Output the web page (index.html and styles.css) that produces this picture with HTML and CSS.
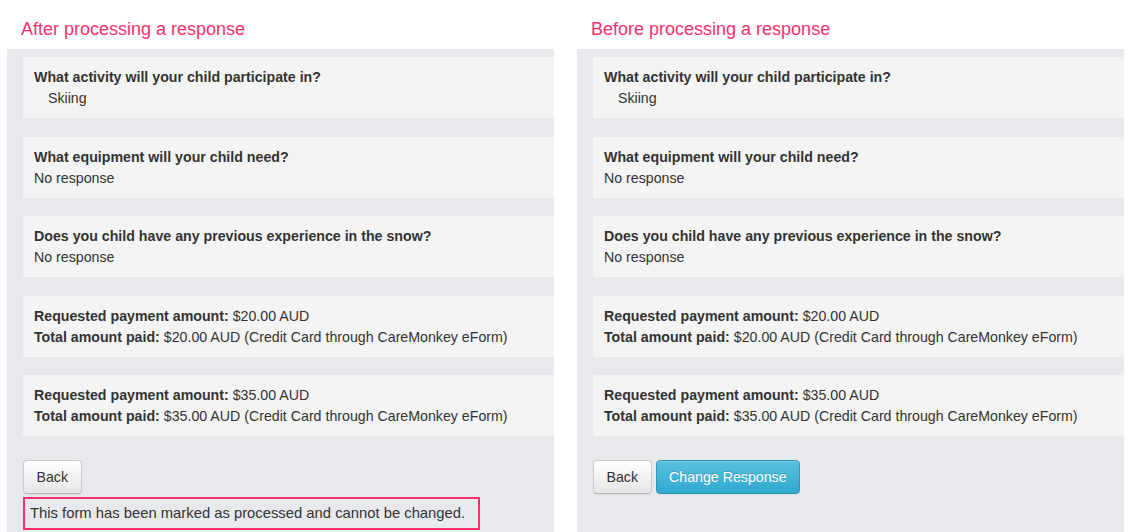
FILE: index.html
```html
<!DOCTYPE html>
<html>
<head>
<meta charset="utf-8">
<link rel="stylesheet" href="styles.css">
</head>
<body>
<div class="page">
  <section class="col">
    <h2 class="title">After processing a response</h2>
    <div class="panel">
      <div class="card"><div class="q">What activity will your child participate in?</div><div class="a indent">Skiing</div></div>
      <div class="card"><div class="q">What equipment will your child need?</div><div class="a">No response</div></div>
      <div class="card"><div class="q">Does you child have any previous experience in the snow?</div><div class="a">No response</div></div>
      <div class="card"><div class="a"><b>Requested payment amount:</b> $20.00 AUD</div><div class="a"><b>Total amount paid:</b> $20.00 AUD (Credit Card through CareMonkey eForm)</div></div>
      <div class="card"><div class="a"><b>Requested payment amount:</b> $35.00 AUD</div><div class="a"><b>Total amount paid:</b> $35.00 AUD (Credit Card through CareMonkey eForm)</div></div>
      <div class="actions"><button class="btn">Back</button></div>
      <div class="notice">This form has been marked as processed and cannot be changed.</div>
    </div>
  </section>
  <section class="col">
    <h2 class="title">Before processing a response</h2>
    <div class="panel">
      <div class="card"><div class="q">What activity will your child participate in?</div><div class="a indent">Skiing</div></div>
      <div class="card"><div class="q">What equipment will your child need?</div><div class="a">No response</div></div>
      <div class="card"><div class="q">Does you child have any previous experience in the snow?</div><div class="a">No response</div></div>
      <div class="card"><div class="a"><b>Requested payment amount:</b> $20.00 AUD</div><div class="a"><b>Total amount paid:</b> $20.00 AUD (Credit Card through CareMonkey eForm)</div></div>
      <div class="card"><div class="a"><b>Requested payment amount:</b> $35.00 AUD</div><div class="a"><b>Total amount paid:</b> $35.00 AUD (Credit Card through CareMonkey eForm)</div></div>
      <div class="actions"><button class="btn">Back</button><button class="btn btn-info">Change Response</button></div>
    </div>
  </section>
</div>
</body>
</html>
```
FILE: styles.css
```css
html, body {
  margin: 0;
  padding: 0;
  background: #ffffff;
  height: 100%;
}
body {
  font-family: "Liberation Sans", Arial, Helvetica, sans-serif;
  color: #333333;
  overflow: hidden;
}
.page {
  display: flex;
  gap: 23px;
  padding-left: 7px;
  height: 532px;
}
.col {
  width: 547px;
  display: flex;
  flex-direction: column;
}
.title {
  margin: 0;
  padding: 18px 0 9px 14px;
  font-size: 18px;
  line-height: 22px;
  font-weight: normal;
  color: #fd2f6e;
}
.panel {
  flex: 1;
  background: #e8e9ec;
  padding: 8px 0 0 16px;
}
.card {
  background: #f4f4f4;
  padding: 10px 11px 9px;
  margin-bottom: 18.5px;
  font-size: 14.2px;
  line-height: 21px;
}
.q {
  font-weight: bold;
}
.indent {
  padding-left: 14px;
}
.actions {
  display: flex;
  gap: 4px;
  margin-top: 5px;
  padding-top: 5px;
}
.btn {
  font-family: inherit;
  font-size: 14.2px;
  line-height: 20px;
  padding: 6px 12.5px;
  color: #333333;
  background: linear-gradient(#ffffff, #e6e6e6);
  border: 1px solid #cccccc;
  border-bottom-color: #b3b3b3;
  border-radius: 4px;
  box-shadow: inset 0 1px 0 rgba(255,255,255,0.2), 0 1px 2px rgba(0,0,0,0.05);
}
.btn-info {
  color: #ffffff;
  background: linear-gradient(#5bc0de, #2fa9d0);
  border-color: #2f96b4;
  text-shadow: 0 -1px 0 rgba(0,0,0,0.15);
}
.notice {
  margin-top: 3px;
  width: 448px;
  border: 2.5px solid #fd2f6e;
  padding: 5px 0 5px 5px;
  font-size: 14.8px;
  line-height: 19px;
}
```
